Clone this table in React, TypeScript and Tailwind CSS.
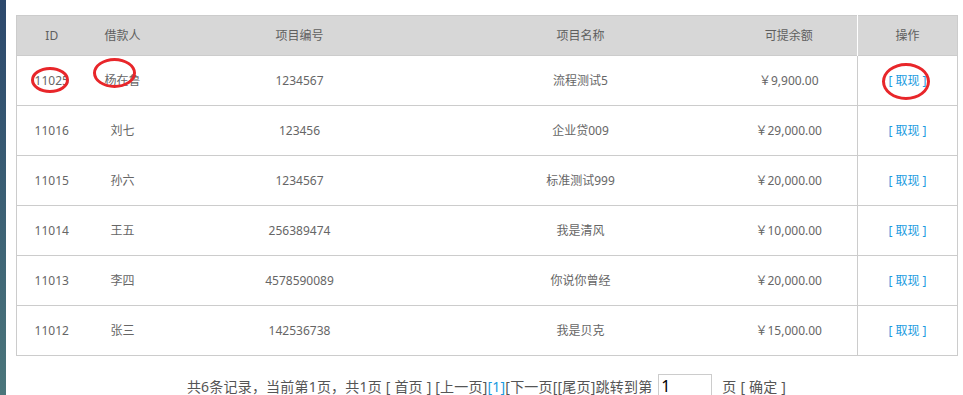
import React from 'react';

interface Loan {
  id: string;
  borrower: string;
  code: string;
  name: string;
  amount: string;
}

const loans: Loan[] = [
  { id: '11025', borrower: '杨在鲁', code: '1234567', name: '流程测试5', amount: '￥9,900.00' },
  { id: '11016', borrower: '刘七', code: '123456', name: '企业贷009', amount: '￥29,000.00' },
  { id: '11015', borrower: '孙六', code: '1234567', name: '标准测试999', amount: '￥20,000.00' },
  { id: '11014', borrower: '王五', code: '256389474', name: '我是清风', amount: '￥10,000.00' },
  { id: '11013', borrower: '李四', code: '4578590089', name: '你说你曾经', amount: '￥20,000.00' },
  { id: '11012', borrower: '张三', code: '142536738', name: '我是贝克', amount: '￥15,000.00' },
];

const font = { fontFamily: '"Noto Sans", "Noto Sans CJK SC", sans-serif' };

// red hand-drawn marks over the first row
const Mark = ({ className }: { className: string }) => (
  <div className={`absolute rounded-[50%] border-[3px] border-[#e8262a] pointer-events-none ${className}`} />
);

const App: React.FC = () => {
  return (
    <div className="relative w-[963px] h-[395px] bg-white overflow-hidden text-[#666]" style={font}>
      <div className="absolute left-0 top-0 h-full w-[6px] bg-gradient-to-b from-[#2c486c] to-[#4b767b]" />

      <div className="pl-[16px] pt-[15px] w-[957px]">
        <table className="w-[941px] table-fixed border-collapse border border-[#cccccc] text-[12px]">
          <colgroup>
            <col className="w-[70px]" />
            <col className="w-[72px]" />
            <col className="w-[282px]" />
            <col className="w-[280px]" />
            <col className="w-[137px]" />
            <col className="w-[100px]" />
          </colgroup>
          <thead>
            <tr className="h-[40px] bg-[#d7d7d7] text-[#5f5f5f]">
              <th className="font-normal text-center">ID</th>
              <th className="font-normal text-center">借款人</th>
              <th className="font-normal text-center">项目编号</th>
              <th className="font-normal text-center">项目名称</th>
              <th className="font-normal text-center">可提余额</th>
              <th className="font-normal text-center border-l border-white">操作</th>
            </tr>
          </thead>
          <tbody>
            {loans.map((l) => (
              <tr key={l.id} className="h-[50px] border-t border-[#cccccc]">
                <td className="text-center">{l.id}</td>
                <td className="text-center">{l.borrower}</td>
                <td className="text-center">{l.code}</td>
                <td className="text-center">{l.name}</td>
                <td className="text-center">{l.amount}</td>
                <td className="text-center border-l border-[#cccccc]">
                  <a className="text-[#1a9be0] cursor-pointer whitespace-pre">[ 取现 ]</a>
                </td>
              </tr>
            ))}
          </tbody>
        </table>

        <div className="mt-[18px] flex items-center justify-center text-[14px] text-[#555] whitespace-pre tracking-[0.2px]">
          <span>共6条记录，当前第1页，共1页 [ 首页 ] [上一页]</span>
          <span className="text-[#1a9be0]">[1]</span>
          <span>[下一页[[尾页]跳转到第</span>
          <input
            defaultValue="1"
            className="ml-[6px] mr-[10px] w-[54px] h-[24px] border border-[#cccccc] px-[2px] text-[16px] text-black outline-none"
          />
          <span>页 [ 确定 ]</span>
        </div>
      </div>

      <Mark className="left-[31px] top-[67px] w-[38px] h-[26px]" />
      <Mark className="left-[93px] top-[58px] w-[43px] h-[30px]" />
      <Mark className="left-[882px] top-[63px] w-[48px] h-[37px]" />
    </div>
  );
};

export default App;
